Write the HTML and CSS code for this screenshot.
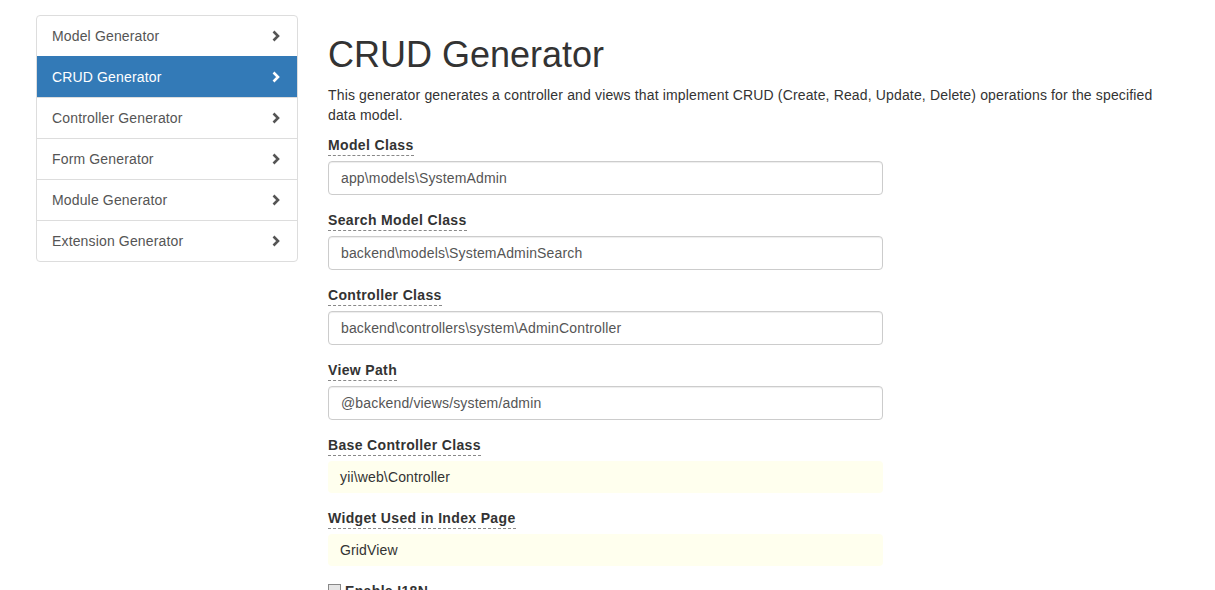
FILE: index.html
```html
<!DOCTYPE html>
<html>
<head>
<meta charset="utf-8">
<title>CRUD Generator</title>
<link rel="stylesheet" href="styles.css">
</head>
<body>
<div class="page">
  <aside class="sidebar">
    <div class="list-group">
      <a class="list-item">Model Generator<svg class="chev" viewBox="0 0 10 12"><path d="M2.5 1.5 L7 6 L2.5 10.5"/></svg></a>
      <a class="list-item active">CRUD Generator<svg class="chev" viewBox="0 0 10 12"><path d="M2.5 1.5 L7 6 L2.5 10.5"/></svg></a>
      <a class="list-item">Controller Generator<svg class="chev" viewBox="0 0 10 12"><path d="M2.5 1.5 L7 6 L2.5 10.5"/></svg></a>
      <a class="list-item">Form Generator<svg class="chev" viewBox="0 0 10 12"><path d="M2.5 1.5 L7 6 L2.5 10.5"/></svg></a>
      <a class="list-item">Module Generator<svg class="chev" viewBox="0 0 10 12"><path d="M2.5 1.5 L7 6 L2.5 10.5"/></svg></a>
      <a class="list-item">Extension Generator<svg class="chev" viewBox="0 0 10 12"><path d="M2.5 1.5 L7 6 L2.5 10.5"/></svg></a>
    </div>
  </aside>
  <main class="main">
    <h1 class="title">CRUD Generator</h1>
    <p class="desc">This generator generates a controller and views that implement CRUD (Create, Read, Update, Delete) operations for the specified data model.</p>
    <div class="form">
      <div class="form-group">
        <label class="hint">Model Class</label>
        <div class="input">app\models\SystemAdmin</div>
      </div>
      <div class="form-group">
        <label class="hint">Search Model Class</label>
        <div class="input">backend\models\SystemAdminSearch</div>
      </div>
      <div class="form-group">
        <label class="hint">Controller Class</label>
        <div class="input">backend\controllers\system\AdminController</div>
      </div>
      <div class="form-group">
        <label class="hint">View Path</label>
        <div class="input">@backend/views/system/admin</div>
      </div>
      <div class="form-group">
        <label class="hint">Base Controller Class</label>
        <div class="input sticky">yii\web\Controller</div>
      </div>
      <div class="form-group">
        <label class="hint">Widget Used in Index Page</label>
        <div class="input sticky">GridView</div>
      </div>
      <div class="checkbox">
        <span class="box"></span><span class="check-label">Enable I18N</span>
      </div>
    </div>
  </main>
</div>
</body>
</html>
```

FILE: styles.css
```css
* { box-sizing: border-box; }
html, body { margin: 0; padding: 0; }
body {
  font-family: "Liberation Sans", Arial, Helvetica, sans-serif;
  font-size: 14px;
  line-height: 20px;
  color: #333;
  background: #fff;
  overflow: hidden;
  letter-spacing: 0.15px;
}
.page {
  display: flex;
  padding: 15px 0 0 36px;
  gap: 30px;
}
.sidebar { width: 262px; flex: none; }
.list-group {
  border: 1px solid #ddd;
  border-radius: 4px;
  overflow: hidden;
}
.list-item {
  display: flex;
  align-items: center;
  justify-content: space-between;
  padding: 10px 16px 10px 15px;
  height: 41px;
  color: #555;
  border-top: 1px solid #ddd;
  text-decoration: none;
}
.list-item:first-child { border-top: none; height: 40px; }
.list-item.active {
  background: #337ab7;
  color: #fff;
  border-top-color: #337ab7;
}
.chev {
  width: 10px;
  height: 12px;
  fill: none;
  stroke: #555;
  stroke-width: 2.6;
  stroke-linecap: butt;
  stroke-linejoin: miter;
}
.active .chev { stroke: #fff; }
.main { width: 848px; flex: none; }
.title {
  font-family: "Liberation Sans", Arial, sans-serif;
  font-size: 36px;
  font-weight: 500;
  line-height: 39.6px;
  margin: 20px 0 10px;
  color: #333;
  letter-spacing: 0;
}
.desc { margin: 0 0 10px; }
.form { width: 555px; }
.form-group { margin-bottom: 15px; }
.hint {
  display: inline-block;
  font-weight: bold;
  letter-spacing: 0.35px;
  border-bottom: 1px dashed #888;
  margin-bottom: 5px;
}
.input {
  height: 34px;
  padding: 6px 12px;
  border: 1px solid #ccc;
  border-radius: 4px;
  box-shadow: inset 0 1px 1px rgba(0,0,0,.075);
  color: #555;
  line-height: 20px;
}
.input.sticky {
  height: 32px;
  padding: 6px 12px;
  background: #ffe;
  border: none;
  box-shadow: none;
  color: #333;
}
.checkbox { display: flex; align-items: center; gap: 4px; margin-top: 3px; }
.box {
  width: 13px; height: 13px;
  border: 1px solid #888;
  background: #e6e6e6;
}
.check-label { font-weight: bold; letter-spacing: 0.35px; }
```
